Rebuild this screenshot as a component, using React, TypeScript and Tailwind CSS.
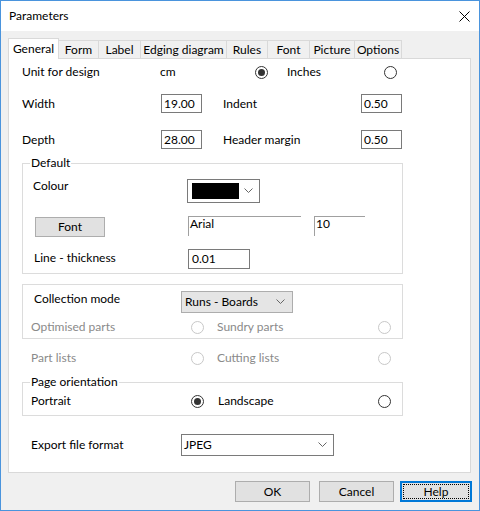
import React from 'react'

const tabs = [
  { label: 'General', w: 'w-[51px]' },
  { label: 'Form', w: 'w-[40px]' },
  { label: 'Label', w: 'w-[42px]' },
  { label: 'Edging diagram', w: 'w-[86px]' },
  { label: 'Rules', w: 'w-[41px]' },
  { label: 'Font', w: 'w-[42px]' },
  { label: 'Picture', w: 'w-[45px]' },
  { label: 'Options', w: 'w-[47px]' },
]

function Radio({ checked = false, disabled = false }: { checked?: boolean; disabled?: boolean }) {
  return (
    <span
      className={`flex h-[13px] w-[13px] shrink-0 items-center justify-center rounded-full border bg-white ${
        disabled ? 'border-[#c8c8c8]' : 'border-[#333]'
      }`}
    >
      {checked ? <span className="h-[7px] w-[7px] rounded-full bg-[#333]" /> : null}
    </span>
  )
}

function Chevron() {
  return (
    <svg width="9" height="6" viewBox="0 0 9 6" className="shrink-0">
      <polyline points="0.5,0.5 4.5,4.5 8.5,0.5" fill="none" stroke="#666" strokeWidth="1" />
    </svg>
  )
}

function TextBox({ value, w }: { value: string; w: string }) {
  return (
    <div className={`flex h-[19px] ${w} items-center border border-[#7a7a7a] bg-white pl-[2px] text-black`}>
      {value}
    </div>
  )
}

function Btn({ label, w, focused = false }: { label: string; w: string; focused?: boolean }) {
  return (
    <div
      className={`flex h-[21px] ${w} items-center justify-center bg-[#e1e1e1] ${
        focused ? 'border-2 border-[#0078d7] p-[1px]' : 'border border-[#adadad]'
      }`}
    >
      {focused ? (
        <div className="flex h-full w-full items-center justify-center border border-dotted border-black">{label}</div>
      ) : (
        label
      )}
    </div>
  )
}

export default function App() {
  return (
    <div className="flex h-[511px] w-[480px] flex-col border border-[#4a94dd] font-['Lato',sans-serif] text-[12px] leading-[16px] text-black">
      {/* title bar */}
      <div className="flex h-[30px] shrink-0 items-center justify-between bg-white pl-[8px] pr-[9px]">
        <span className="-mt-[1px]">Parameters</span>
        <svg width="11" height="11" viewBox="0 0 11 11">
          <line x1="0.5" y1="0.5" x2="10.5" y2="10.5" stroke="#000" strokeWidth="1" />
          <line x1="10.5" y1="0.5" x2="0.5" y2="10.5" stroke="#000" strokeWidth="1" />
        </svg>
      </div>

      <div className="flex flex-1 flex-col bg-[#f0f0f0] pl-[7px] pt-[7px]">
        {/* tabs */}
        <div className="flex h-[20px] items-start">
          {tabs.map((t, i) =>
            i === 0 ? (
              <div
                key={t.label}
                className={`relative z-10 flex h-[21px] ${t.w} items-center justify-center border-l border-r border-t border-[#d9d9d9] bg-white`}
              >
                {t.label}
              </div>
            ) : (
              <div
                key={t.label}
                className={`mt-[2px] flex h-[18px] ${t.w} items-center justify-center border-r border-t border-[#d9d9d9] bg-[#f0f0f0]`}
              >
                {t.label}
              </div>
            ),
          )}
        </div>

        {/* panel */}
        <div className="flex h-[415px] w-[463px] flex-col border border-[#d9d9d9] bg-white pl-[13px]">
          <div className="mt-[3px] flex h-[20px] items-center">
            <span className="w-[138px]">Unit for design</span>
            <span className="w-[95px]">cm</span>
            <Radio checked />
            <span className="ml-[19px] w-[97px]">Inches</span>
            <Radio />
          </div>

          <div className="mt-[12px] flex h-[19px] items-center">
            <span className="w-[139px]">Width</span>
            <TextBox value="19.00" w="w-[41px]" />
            <span className="ml-[21px] w-[138px]">Indent</span>
            <TextBox value="0.50" w="w-[41px]" />
          </div>

          <div className="mt-[17px] flex h-[19px] items-center">
            <span className="w-[139px]">Depth</span>
            <TextBox value="28.00" w="w-[41px]" />
            <span className="ml-[21px] w-[138px]">Header margin</span>
            <TextBox value="0.50" w="w-[41px]" />
          </div>

          {/* Default group */}
          <fieldset className="mt-[6px] w-[381px] border border-[#dcdcdc] pb-[4px]">
            <legend className="ml-[7px] px-[1px]">Default</legend>
            <div className="mt-[8px] flex items-start">
              <span className="-mt-[1px] w-[164px] pl-[10px]">Colour</span>
              <div className="flex h-[24px] w-[73px] items-center border border-[#7a7a7a] bg-white pl-[4px] pr-[6px]">
                <div className="h-[16px] w-[47px] bg-black" />
                <div className="flex-1" />
                <Chevron />
              </div>
            </div>
            <div className="mt-[13px] flex h-[20px] items-start">
              <div className="w-[165px] pl-[12px]">
                <div className="mt-[1px] flex h-[20px] w-[70px] items-center justify-center border border-[#adadad] bg-[#e1e1e1]">
                  Font
                </div>
              </div>
              <div className="h-[20px] w-[113px] border-l border-t border-[#a0a0a0] pl-[1px] leading-[14px]">Arial</div>
              <div className="ml-[13px] h-[20px] w-[51px] border-l border-t border-[#a0a0a0] pl-[1px] leading-[14px]">10</div>
            </div>
            <div className="mt-[13px] flex h-[20px] items-center">
              <span className="-mt-[2px] w-[165px] pl-[11px]">Line - thickness</span>
              <div className="flex h-[20px] w-[62px] items-center border border-[#7a7a7a] bg-white pl-[3px]">0.01</div>
            </div>
          </fieldset>

          {/* Collection group */}
          <div className="mt-[10px] w-[381px] border border-[#dcdcdc] pb-[3px] pt-[6px]">
            <div className="flex items-start">
              <span className="w-[158px] pl-[11px]">Collection mode</span>
              <div className="flex h-[22px] w-[112px] items-center justify-between border border-[#adadad] bg-[#e5e5e5] pl-[3px] pr-[7px]">
                <span>Runs - Boards</span>
                <Chevron />
              </div>
            </div>
            <div className="mt-[6px] flex h-[16px] items-center text-[#8a8a8a]">
              <span className="w-[168px] pl-[8px]">Optimised parts</span>
              <Radio disabled />
              <span className="ml-[13px] w-[161px]">Sundry parts</span>
              <Radio disabled />
            </div>
          </div>

          <div className="mt-[11px] flex h-[16px] items-center text-[#8a8a8a]">
            <span className="w-[169px] pl-[9px]">Part lists</span>
            <Radio disabled />
            <span className="ml-[13px] w-[161px]">Cutting lists</span>
            <Radio disabled />
          </div>

          {/* Page orientation */}
          <fieldset className="mt-[8px] w-[381px] border border-[#dcdcdc] pb-[6px]">
            <legend className="ml-[7px] px-[1px]">Page orientation</legend>
            <div className="mt-[3px] flex h-[16px] items-center">
              <span className="w-[168px] pl-[8px]">Portrait</span>
              <Radio checked />
              <span className="ml-[14px] w-[160px]">Landscape</span>
              <Radio />
            </div>
          </fieldset>

          <div className="mt-[18px] flex items-center">
            <span className="w-[159px] pl-[9px]">Export file format</span>
            <div className="flex h-[22px] w-[153px] items-center justify-between border border-[#7a7a7a] bg-white pl-[2px] pr-[6px]">
              <span>JPEG</span>
              <Chevron />
            </div>
          </div>
        </div>

        {/* buttons */}
        <div className="mt-[8px] flex justify-end pr-[7px]">
          <Btn label="OK" w="w-[75px]" />
          <div className="ml-[9px]">
            <Btn label="Cancel" w="w-[75px]" />
          </div>
          <div className="ml-[6px]">
            <Btn label="Help" w="w-[72px]" focused />
          </div>
        </div>
      </div>
    </div>
  )
}
